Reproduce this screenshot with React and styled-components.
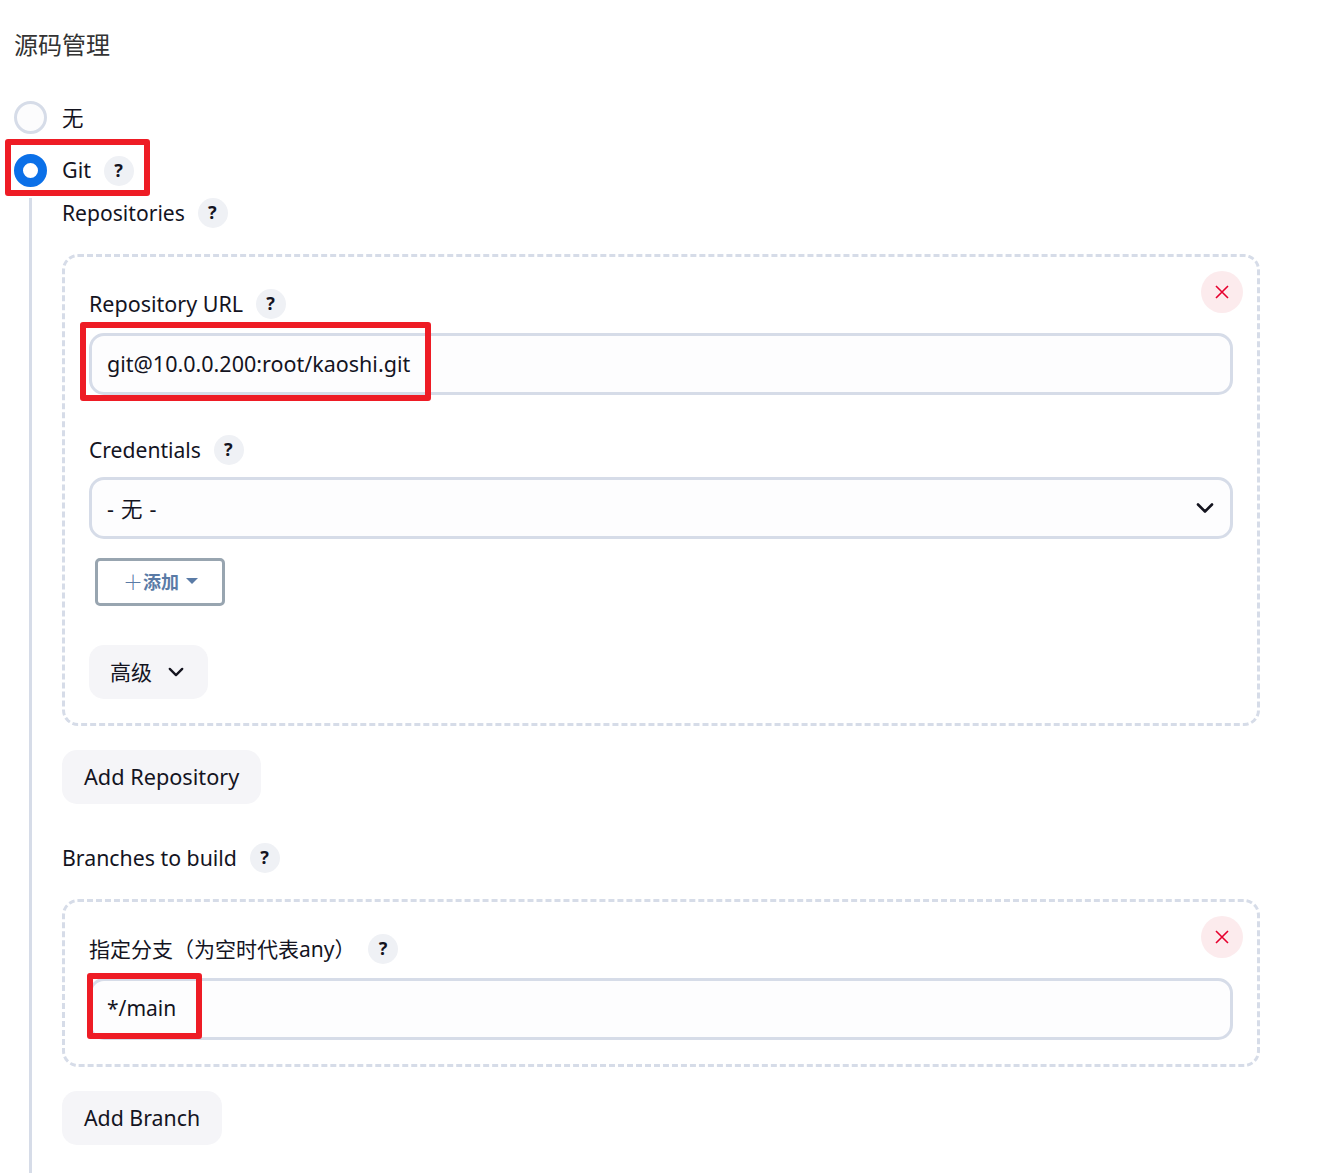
import React from "react";
import styled, { createGlobalStyle } from "styled-components";

const GlobalStyle = createGlobalStyle`
  html, body {
    margin: 0;
    background: #fff;
  }
  body {
    font-family: "Noto Sans", "Noto Sans CJK SC", sans-serif;
    color: #14141f;
  }
`;

const Page = styled.div`
  box-sizing: border-box;
  height: 1173px;
  overflow: hidden;
  padding: 28px 0 0 14px;
`;

const Title = styled.h2`
  margin: 0 0 39px;
  height: 34px;
  font-size: 24px;
  line-height: 34px;
  font-weight: 400;
  color: #333;
`;

const RadioRow = styled.div`
  position: relative;
  display: flex;
  align-items: center;
  height: 33px;
  margin-bottom: ${(p) => p.$gap || 0}px;
`;

const Radio = styled.span`
  box-sizing: border-box;
  width: 33px;
  height: 33px;
  border-radius: 50%;
  flex: none;
  margin-right: 15px;
  background: ${(p) => (p.$on ? "#fff" : "#fcfcfd")};
  border: ${(p) => (p.$on ? "9.5px solid #0b70e8" : "3px solid #d6dce8")};
`;

const Text = styled.span`
  display: block;
  padding-bottom: 2px;
  font-size: ${(p) => p.$size || 21.5}px;
`;

const Help = styled.span`
  box-sizing: border-box;
  display: inline-flex;
  align-items: center;
  justify-content: center;
  width: 30px;
  height: 30px;
  flex: none;
  margin-left: 13px;
  padding: 0 1px 2px 0;
  border-radius: 50%;
  background: #eff1f5;
  font-size: 18px;
  font-weight: 700;
  color: #14141f;
`;

const Mark = styled.div`
  position: absolute;
  box-sizing: border-box;
  border: 6px solid #ee1c25;
  border-radius: 3px;
  pointer-events: none;
  left: ${(p) => p.$x}px;
  top: ${(p) => p.$y}px;
  width: ${(p) => p.$w}px;
  height: ${(p) => p.$h}px;
`;

const Nested = styled.div`
  margin: 11px 0 0 15px;
  padding-left: 30px;
  border-left: 3px solid #d6dce8;
  height: 1000px;
`;

const Label = styled.div`
  display: flex;
  align-items: center;
  height: 30px;
  margin-bottom: ${(p) => p.$gap || 0}px;
`;

const RepeatBox = styled.div`
  position: relative;
  box-sizing: border-box;
  width: 1198px;
  padding: 32px 24px 24px;
  margin-bottom: 24px;
  border: 3px dashed #d6dce8;
  border-radius: 16px;
`;

const CloseButton = styled.button`
  position: absolute;
  top: 14px;
  right: 14px;
  width: 42px;
  height: 42px;
  padding: 0;
  display: flex;
  align-items: center;
  justify-content: center;
  border: none;
  border-radius: 50%;
  background: #fcebed;
  color: #e6002e;
`;

const FieldWrap = styled.div`
  position: relative;
  width: 1144px;
  margin-bottom: ${(p) => p.$gap || 0}px;
`;

const Field = styled.div`
  box-sizing: border-box;
  display: flex;
  align-items: center;
  justify-content: space-between;
  height: 62px;
  padding: 0 16px 0 15px;
  background: #fdfdfe;
  border: 3px solid #d6dce8;
  border-radius: 15px;
  word-spacing: 1.5px;
`;

const AddButton = styled.button`
  box-sizing: border-box;
  display: flex;
  align-items: center;
  justify-content: center;
  width: 130px;
  height: 48px;
  margin: 0 0 39px 6px;
  padding: 0 0 2px 1px;
  background: #fff;
  border: 3px solid #98a5b0;
  border-radius: 5px;
  color: #5a7ba6;
  font-family: inherit;
  font-size: 18px;
  font-weight: 700;
`;

const Plus = styled.span`
  font-size: 20px;
  font-weight: 300;
`;

const Caret = styled.span`
  width: 0;
  height: 0;
  margin-left: 7px;
  border-left: 6px solid transparent;
  border-right: 6px solid transparent;
  border-top: 6px solid #5a7ba6;
`;

const SoftButton = styled.button`
  display: flex;
  align-items: center;
  gap: 16px;
  box-sizing: border-box;
  height: 54px;
  padding: 0 22px;
  border: none;
  border-radius: 15px;
  background: #f5f5f8;
  color: #14141f;
  font-family: inherit;
  margin-bottom: ${(p) => p.$gap || 0}px;
`;

const AdvancedButton = styled(SoftButton)`
  padding: 0 24px 0 21px;
`;

const CloseIcon = () => (
  <svg width="14" height="14" viewBox="0 0 14 14" fill="none" stroke="currentColor" strokeWidth="1.6">
    <path d="M1 1l12 12M13 1L1 13" />
  </svg>
);

const Chevron = ({ size = 18 }) => (
  <svg width={size} height={size} viewBox="0 0 18 18" fill="none" stroke="#14141f" strokeWidth="2.6" strokeLinecap="round" strokeLinejoin="round">
    <path d="M2 5.5l7 7 7-7" />
  </svg>
);

export default function App() {
  return (
    <Page>
      <GlobalStyle />
      <Title>源码管理</Title>
      <RadioRow $gap={20}>
        <Radio />
        <Text>无</Text>
      </RadioRow>
      <RadioRow>
        <Radio $on />
        <Text>Git</Text>
        <Help>?</Help>
        <Mark $x={-9} $y={-15} $w={145} $h={57} />
      </RadioRow>
      <Nested>
        <Label $gap={26}>
          <Text $size={21.1}>Repositories</Text>
          <Help>?</Help>
        </Label>
        <RepeatBox>
          <CloseButton>
            <CloseIcon />
          </CloseButton>
          <Label $gap={14}>
            <Text $size={21.5}>Repository URL</Text>
            <Help>?</Help>
          </Label>
          <FieldWrap $gap={40}>
            <Field>
              <Text>git@10.0.0.200:root/kaoshi.git</Text>
            </Field>
            <Mark $x={-9} $y={-11} $w={351} $h={79} />
          </FieldWrap>
          <Label $gap={12}>
            <Text $size={21.1}>Credentials</Text>
            <Help>?</Help>
          </Label>
          <FieldWrap $gap={19}>
            <Field>
              <Text>- 无 -</Text>
              <Chevron />
            </Field>
          </FieldWrap>
          <AddButton>
            <Plus>＋</Plus>
            添加
            <Caret />
          </AddButton>
          <AdvancedButton>
            <Text $size={21}>高级</Text>
            <Chevron size={16} />
          </AdvancedButton>
        </RepeatBox>
        <SoftButton $gap={39}>
          <Text $size={21.7}>Add Repository</Text>
        </SoftButton>
        <Label $gap={26}>
          <Text $size={21.3}>Branches to build</Text>
          <Help>?</Help>
        </Label>
        <RepeatBox>
          <CloseButton>
            <CloseIcon />
          </CloseButton>
          <Label $gap={14}>
            <Text $size={21}>指定分支（为空时代表any）</Text>
            <Help>?</Help>
          </Label>
          <FieldWrap>
            <Field>
              <Text $size={21}>*/main</Text>
            </Field>
            <Mark $x={-2} $y={-5} $w={115} $h={66} />
          </FieldWrap>
        </RepeatBox>
        <SoftButton>
          <Text $size={21.3}>Add Branch</Text>
        </SoftButton>
      </Nested>
    </Page>
  );
}
